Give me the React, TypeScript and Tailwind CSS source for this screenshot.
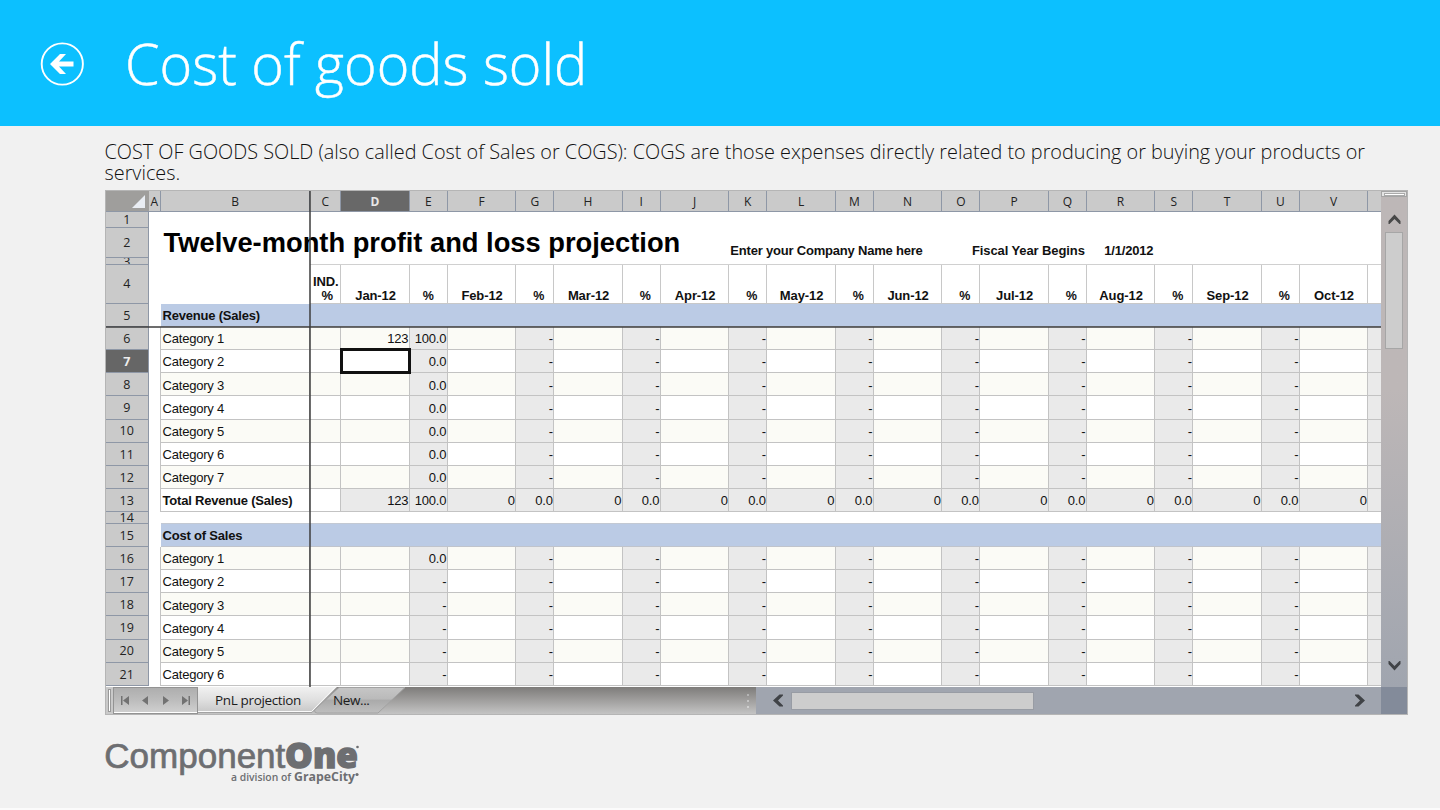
import React from 'react';
import clsx from 'clsx';

interface Column {
  letter: string;
  width: number;
  month?: string;
}

type RowKind = 'blank' | 'title' | 'months' | 'section' | 'category' | 'total';

interface Row {
  num: number;
  height: number;
  kind: RowKind;
  label?: string;
  d?: string;
  e?: string;
}

const MONTHS = ['Jan-12', 'Feb-12', 'Mar-12', 'Apr-12', 'May-12', 'Jun-12', 'Jul-12', 'Aug-12', 'Sep-12', 'Oct-12'];

const columns: Column[] = [
  { letter: 'A', width: 12.5 },
  { letter: 'B', width: 149.3 },
  { letter: 'C', width: 31 },
  ...MONTHS.flatMap((month, i) => [
    { letter: String.fromCharCode(68 + i * 2), width: 68.5, month },
    { letter: i < 9 ? String.fromCharCode(69 + i * 2) : '', width: 38 },
  ]),
];

const H = 23.17;

const rows: Row[] = [
  { num: 1, height: 16, kind: 'blank' },
  { num: 2, height: 30.5, kind: 'title' },
  { num: 3, height: 6.5, kind: 'blank' },
  { num: 4, height: 39, kind: 'months' },
  { num: 5, height: 23.5, kind: 'section', label: 'Revenue (Sales)' },
  { num: 6, height: H, kind: 'category', label: 'Category 1', d: '123', e: '100.0' },
  { num: 7, height: H, kind: 'category', label: 'Category 2', e: '0.0' },
  { num: 8, height: H, kind: 'category', label: 'Category 3', e: '0.0' },
  { num: 9, height: H, kind: 'category', label: 'Category 4', e: '0.0' },
  { num: 10, height: H, kind: 'category', label: 'Category 5', e: '0.0' },
  { num: 11, height: H, kind: 'category', label: 'Category 6', e: '0.0' },
  { num: 12, height: H, kind: 'category', label: 'Category 7', e: '0.0' },
  { num: 13, height: H, kind: 'total', label: 'Total Revenue (Sales)', d: '123', e: '100.0' },
  { num: 14, height: 11.6, kind: 'blank' },
  { num: 15, height: H, kind: 'section', label: 'Cost of Sales' },
  { num: 16, height: H, kind: 'category', label: 'Category 1', e: '0.0' },
  { num: 17, height: H, kind: 'category', label: 'Category 2', e: '-' },
  { num: 18, height: H, kind: 'category', label: 'Category 3', e: '-' },
  { num: 19, height: H, kind: 'category', label: 'Category 4', e: '-' },
  { num: 20, height: H, kind: 'category', label: 'Category 5', e: '-' },
  { num: 21, height: H, kind: 'category', label: 'Category 6', e: '-' },
];

const cellText = (row: Row, index: number): string => {
  if (row.kind !== 'category' && row.kind !== 'total') return '';
  if (index === 1) return row.label ?? '';
  if (index === 3) return row.d ?? '';
  if (index === 4) return row.e ?? '';
  if (index < 5 || index === 22) return '';
  const percent = index % 2 === 0;
  if (row.kind === 'total') return percent ? '0.0' : '0';
  return percent ? '-' : '';
};

const TitleCell: React.FC<{ index: number }> = ({ index }) => {
  if (index === 1) return <span className="self-end pl-[2.6px] text-[27.3px] leading-[31px] font-bold text-black">Twelve-month profit and loss projection</span>;
  if (index === 10) return <span className="self-end pl-px text-[13px] leading-[15px] font-bold tracking-[-0.2px]">Enter your Company Name here</span>;
  if (index === 16) return <span className="self-end pr-[2px] text-[13px] leading-[15px] font-bold tracking-[-0.1px]">Fiscal Year Begins</span>;
  if (index === 17) return <span className="self-end pr-[2px] text-[13px] leading-[15px] font-bold tracking-[-0.2px]">1/1/2012</span>;
  return null;
};

const MonthCell: React.FC<{ column: Column; index: number }> = ({ column, index }) => {
  if (index === 2) {
    return (
      <span className="w-full self-end pl-px text-center text-[13px] leading-[14px] font-bold tracking-[-0.1px]">
        IND.<br /><span className="pl-[3px]">%</span>
      </span>
    );
  }
  if (column.month) {
    return <span className="w-full self-end pl-px text-center text-[13px] leading-[14px] font-bold tracking-[-0.1px]">{column.month}</span>;
  }
  if (index < 4 || index === 22) return null;
  return <span className={clsx('w-full self-end text-center text-[12.5px] leading-[14px] font-bold', index > 4 && 'pl-2')}>%</span>;
};

const Cell: React.FC<{ row: Row; column: Column; index: number }> = ({ row, column, index }) => {
  const percent = index >= 4 && index % 2 === 0;
  const grid = row.kind === 'category' || row.kind === 'total';
  return (
    <div
      style={{ width: column.width }}
      className={clsx(
        'flex shrink-0 whitespace-nowrap',
        row.kind === 'title' && index > 10 && 'justify-end',
        index > 0 && grid && 'items-center border-r border-b border-[#c3c3c3] pt-[1.5px]',
        index > 1 && row.kind === 'months' && 'border-r border-b border-[#c8c8c8]',
        index > 1 && row.num === 3 && 'border-b border-[#d0d0d0]',
        index > 0 && row.num === 14 && 'border-b border-[#c3c9d3]',
        index === 0 && grid && 'border-r border-[#c3c3c3]',
        index > 0 && row.kind === 'section' && 'items-center border-b border-[#c0c4cc] bg-[#bbcbe5] pt-px',
        index > 0 && row.kind === 'category' && (percent ? 'bg-[#eaeaea]' : row.num % 2 === 0 ? 'bg-[#fbfbf6]' : 'bg-white'),
        row.kind === 'total' && index > 2 && 'bg-[#eaeaea]',
      )}
    >
      {row.kind === 'title' && <TitleCell index={index} />}
      {row.kind === 'months' && <MonthCell column={column} index={index} />}
      {row.kind === 'section' && index === 1 && <span className="pl-[1.5px] text-[13px] font-bold tracking-[-0.2px]">{row.label}</span>}
      {grid && (
        <span
          className={clsx(
            'text-[13px] leading-[19px] tracking-[-0.2px]',
            index === 1 ? 'pl-[1.5px]' : 'ml-auto pr-[0.5px]',
            index === 1 && row.kind === 'total' && 'font-bold',
          )}
        >
          {cellText(row, index)}
        </span>
      )}
    </div>
  );
};

const ColumnHeaders: React.FC = () => (
  <div className="flex h-[20.5px] font-['Open_Sans',sans-serif] text-[12px] font-medium text-[#222]">
    <div className="flex w-[42.5px] shrink-0 items-end justify-end border-b border-[#8e97a6] bg-[#9f9e9c] pr-1 pb-[3px]">
      <svg width="13" height="13" viewBox="0 0 13 13">
        <path d="M13 0V13H0Z" fill="#e9edf3" />
      </svg>
    </div>
    {columns.map((column, i) => (
      <div
        key={i}
        style={{ width: column.width }}
        className={clsx(
          'flex shrink-0 items-center justify-center border-r border-b border-[#8e97a6] pt-[2px] leading-[18px]',
          column.letter === 'D' ? 'bg-[#686868] font-bold text-[#e8e8e8]' : 'bg-[#cacaca]',
        )}
      >
        {column.letter}
      </div>
    ))}
  </div>
);

const Grid: React.FC = () => (
  <div className="relative h-[496px] w-[1275px] overflow-hidden bg-white">
    <ColumnHeaders />
    {rows.map(row => (
      <div key={row.num} style={{ height: row.height }} className="flex font-['Liberation_Sans',Arial,sans-serif] text-[#111]">
        <div
          className={clsx(
            "flex w-[42.5px] shrink-0 items-center justify-center overflow-hidden border-r border-b border-[#8e97a6] pt-[2px] font-['Open_Sans',sans-serif] text-[12.5px] leading-none",
            row.num === 7 ? 'bg-[#666] font-bold text-[#eee]' : 'bg-[#cacaca] font-medium text-[#222]',
          )}
        >
          {row.num}
        </div>
        {columns.map((column, i) => (
          <Cell key={i} row={row} column={column} index={i} />
        ))}
      </div>
    ))}
    {/* frozen pane lines */}
    <div className="absolute top-0 left-[203px] h-full w-[2px] bg-[#3c3c3c]/75" />
    <div className="absolute top-[135px] left-0 h-[2px] w-full bg-[#3c3c3c]/75" />
    {/* cell cursor */}
    <div className="absolute top-[157px] left-[234px] h-[26px] w-[71px] border-3 border-[#111]" />
  </div>
);

const VerticalScroll: React.FC = () => (
  <div className="flex flex-1 flex-col items-center bg-linear-to-b from-[#bdb7b7] from-40% to-[#a0a5af]">
    <div className="flex h-[6px] w-full items-center justify-center border border-[#a5a5a5] bg-[#e4e4e4]">
      <div className="h-[3px] w-[21px] border border-[#aaa] bg-white" />
    </div>
    <svg className="mt-[17px]" width="13" height="11" viewBox="0 0 13 11">
      <path d="M0.500 10V7L6.500 0.500L12.500 7V10H11.500L6.500 5L1.500 10Z" fill="#484848" />
    </svg>
    <div className="mt-[7px] h-[117px] w-[18px] border border-[#a6a6a6] bg-[#cdcdcd]" />
    <svg className="mt-auto mb-[16px]" width="13" height="11" viewBox="0 0 13 11">
      <path d="M0.500 1V4L6.500 10.500L12.500 4V1H11.500L6.500 6L1.500 1Z" fill="#404347" />
    </svg>
  </div>
);

const SheetTabs: React.FC = () => (
  <div className="flex w-[650px] bg-linear-to-b from-[#7e7c7a] to-[#c4c4c4]">
    <div className="flex w-[7px] justify-center bg-[#c9c9c9] py-[2px]">
      <div className="w-[3px] border border-[#999] bg-white" />
    </div>
    <div className="w-[85px] border border-[#939393] bg-white pb-px">
      <div className="flex h-full items-center justify-between bg-linear-to-b from-[#aeaeae] via-[#bcbcbc] to-[#cfcfcf] px-[7px]">
        <svg width="9" height="9" viewBox="0 0 9 9" fill="#727272"><path d="M0 0h1.500v9H0zM8 0v9L2 4.500z" /></svg>
        <svg width="9" height="9" viewBox="0 0 9 9" fill="#727272"><path d="M7 0v9L1 4.500z" /></svg>
        <svg width="9" height="9" viewBox="0 0 9 9" fill="#727272"><path d="M2 0v9l6-4.500z" /></svg>
        <svg width="9" height="9" viewBox="0 0 9 9" fill="#727272"><path d="M1 0v9l6-4.500zM7.500 0H9v9H7.500z" /></svg>
      </div>
    </div>
    <div className="relative w-[220px] font-['Open_Sans',sans-serif] text-[13.5px] text-[#1c1c1c]">
      <svg className="absolute inset-0" width="220" height="27" viewBox="0 0 220 27">
        <defs>
          <linearGradient id="tabActive" x1="0" y1="0" x2="0" y2="1">
            <stop offset="0" stopColor="#f1f1f1" />
            <stop offset="0.5" stopColor="#e0e0e0" />
            <stop offset="1" stopColor="#c8c8c8" />
          </linearGradient>
          <linearGradient id="tabNew" x1="0" y1="0" x2="0" y2="1">
            <stop offset="0" stopColor="#c6c6c6" />
            <stop offset="0.45" stopColor="#bababa" />
            <stop offset="0.5" stopColor="#aaaaaa" />
            <stop offset="1" stopColor="#bfbfbf" />
          </linearGradient>
        </defs>
        <path d="M116.500 23L141 0.500H207L180 26H119Q116.500 26 116.500 23Z" fill="url(#tabNew)" stroke="#a2a2a2" />
        <path d="M0 0H139L114 25H0Z" fill="url(#tabActive)" />
        <path d="M0 24.500H113.500L137 0.500" fill="none" stroke="#fafafa" />
        <path d="M0 25.500H114L139 0.500" fill="none" stroke="#a2a2a2" />
      </svg>
      <div className="relative flex h-full items-center">
        <span className="w-[118px] pl-[17px] tracking-[-0.35px] whitespace-nowrap">PnL projection</span>
        <span className="pl-[17px] tracking-[-0.4px]">New...</span>
      </div>
    </div>
    <div className="mr-[7px] ml-auto flex flex-col justify-center gap-1">
      <i className="size-[2px] bg-[#b4b4b4]" />
      <i className="size-[2px] bg-[#c4c4c4]" />
      <i className="size-[2px] bg-[#d0d0d0]" />
    </div>
  </div>
);

const HorizontalScroll: React.FC = () => (
  <div className="flex flex-1 items-center bg-[#a0a5af]">
    <svg className="ml-[17px]" width="10" height="13" viewBox="0 0 10 13">
      <path d="M10 0.500H6.500L0 6.500L6.500 12.500H10V11.500L5 6.500L10 1.500Z" fill="#404347" />
    </svg>
    <div className="ml-2 h-[18px] w-[243px] border border-[#989ca4] bg-[#cdcdcd]" />
    <svg className="mr-[16px] ml-auto" width="10" height="13" viewBox="0 0 10 13">
      <path d="M0 0.500H3.500L10 6.500L3.500 12.500H0V11.500L5 6.500L0 1.500Z" fill="#404347" />
    </svg>
    <div className="h-full w-[26px] bg-[#838b9a]" />
  </div>
);

const Logo: React.FC = () => (
  <svg width="262" height="52" viewBox="0 0 262 52" fill="#6d6e71">
    <text x="-0.700" y="32.500" fontFamily="Liberation Sans, Arial, sans-serif" fontSize="35.500" textLength="181" lengthAdjust="spacingAndGlyphs" stroke="#6d6e71" strokeWidth="0.7">Component</text>
    <text x="180" y="32.500" fontFamily="Open Sans, sans-serif" fontSize="35" fontWeight="800" textLength="73" lengthAdjust="spacingAndGlyphs" stroke="#6d6e71" strokeWidth="1.4">One</text>
    <text x="126" y="45.500" fontFamily="Open Sans, sans-serif" fontSize="11.500" fontWeight="600" textLength="60" lengthAdjust="spacingAndGlyphs">a division of</text>
    <text x="189" y="45.500" fontFamily="Open Sans, sans-serif" fontSize="12" fontWeight="700" textLength="61" lengthAdjust="spacingAndGlyphs">GrapeCity</text>
    <circle cx="252" cy="39.500" r="1.600" />
    <circle cx="252.500" cy="12" r="1.300" />
  </svg>
);

const App: React.FC = () => (
  <div className="flex h-[810px] w-[1440px] flex-col overflow-hidden border-b-2 border-[#fbfbfb] bg-[#f1f1f1]">
    <header className="flex h-[126px] shrink-0 items-center bg-[#0cc0ff] pl-10 text-white">
      <svg className="mt-[2px]" width="44" height="44" viewBox="0 0 44 44">
        <circle cx="22.300" cy="22" r="20.600" fill="none" stroke="#fff" strokeWidth="1.900" />
        <path d="M10 22L20 12H26L19 19.500H33.500V24.500H19L26 32H20Z" fill="#fff" />
      </svg>
      <h1 className="mt-[2px] ml-[41px] origin-left scale-x-[0.977] font-['Open_Sans',sans-serif] text-[57px] font-light whitespace-nowrap [-webkit-text-stroke:0.5px_white]">Cost of goods sold</h1>
    </header>
    <main className="pt-[15px] pl-[104.5px]">
      <p className="h-[49px] w-[1290px] font-['Open_Sans',sans-serif] text-[19.83px] leading-[21px] font-light text-[#111]">
        COST OF GOODS SOLD (also called Cost of Sales or COGS): COGS are those expenses directly related to producing or buying your products or services.
      </p>
      <div className="ml-[0.5px] w-[1303px] border border-[#b5b5b5]">
        <div className="flex">
          <Grid />
          <VerticalScroll />
        </div>
        <div className="flex h-[27px]">
          <SheetTabs />
          <HorizontalScroll />
        </div>
      </div>
      <div className="mt-[20px] pl-[0.5px]">
        <Logo />
      </div>
    </main>
  </div>
);

export default App;
